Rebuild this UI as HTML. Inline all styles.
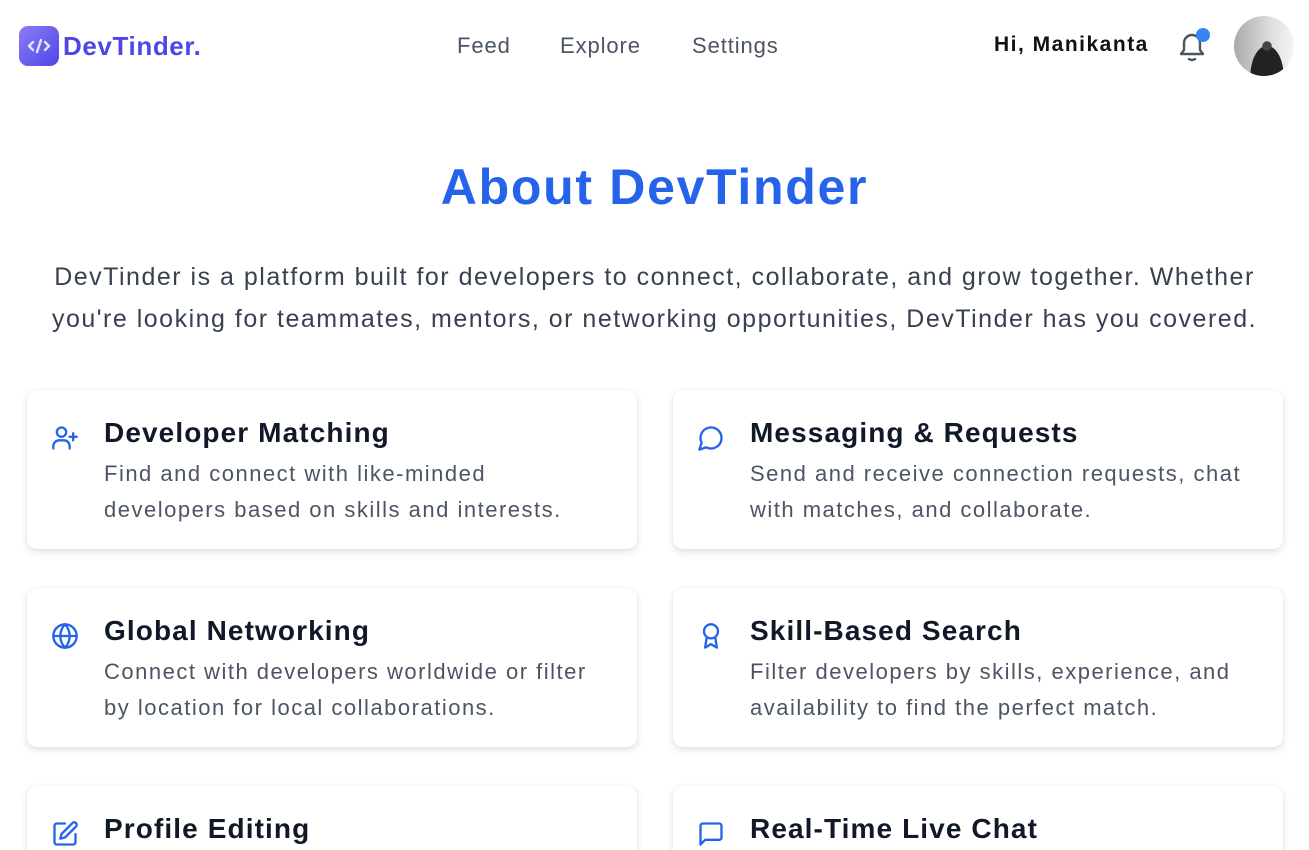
<!DOCTYPE html>
<html><head><meta charset="utf-8"><style>
*{box-sizing:border-box;margin:0;padding:0}
html,body{width:1309px;height:850px;overflow:hidden}
body{background:#fff;font-family:"Liberation Sans",sans-serif;position:relative}
.abs{position:absolute}
.nav a{position:absolute;top:33px;font-size:22px;color:#4b5563;letter-spacing:0.9px}
.card{position:absolute;width:610px;height:159px;background:#fff;border-radius:10px;box-shadow:0 3px 8px rgba(0,0,0,.12),0 0 2px rgba(0,0,0,.06)}
.card.last{height:64px;border-radius:10px 10px 0 0}
.card svg{position:absolute;left:24px;top:34px}
.card h3{position:absolute;left:77px;top:27px;font-size:28px;font-weight:bold;color:#111827;white-space:nowrap;letter-spacing:1.1px}
.card p{position:absolute;left:77px;top:66px;width:540px;font-size:22px;line-height:36px;color:#4b5563;letter-spacing:1.5px;white-space:nowrap}
</style></head><body>
<div class="abs" style="left:19px;top:26px;width:40px;height:40px;border-radius:9px;background:linear-gradient(135deg,#8b7cf8,#4f46e5)">
<svg width="40" height="40" viewBox="0 0 40 40" fill="none" stroke="#e0e7ff" stroke-width="2.4" stroke-linecap="round" stroke-linejoin="round"><path d="M14 16l-4 4 4 4M26 16l4 4-4 4M22 14l-4 12"/></svg></div>
<div class="abs" style="left:63px;top:31px;font-size:26px;font-weight:bold;color:#4f46e5;letter-spacing:0.6px">DevTinder.</div>
<div class="nav"><a style="left:457px">Feed</a><a style="left:560px">Explore</a><a style="left:692px">Settings</a></div>
<div class="abs" style="left:994px;top:33px;font-size:21px;font-weight:bold;color:#111;letter-spacing:1.5px">Hi, Manikanta</div>
<svg class="abs" style="left:1174px;top:28px" width="36" height="36" viewBox="0 0 36 36" fill="none" stroke="#4b5563" stroke-width="2.4" stroke-linecap="round" stroke-linejoin="round"><path d="M10 22V15a8 8 0 0 1 16 0v7l3 4H7z"/><path d="M15 31q3 2 6 0"/></svg>
<div class="abs" style="left:1196px;top:28px;width:14px;height:14px;border-radius:50%;background:#3b82f6"></div>
<div class="abs" style="left:1234px;top:16px;width:60px;height:60px;border-radius:50%;background:radial-gradient(circle at 55% 50%,#444 0 10%,transparent 11%),radial-gradient(ellipse at 55% 100%,#222 0 35%,transparent 36%),linear-gradient(90deg,#aaa,#ddd 60%,#f5f5f5)"></div>
<h1 class="abs" style="left:0;width:1309px;top:158px;text-align:center;font-size:50px;font-weight:bold;color:#2563eb;letter-spacing:1.7px">About DevTinder</h1>
<p class="abs" style="left:0;width:1309px;top:256px;text-align:center;font-size:25px;line-height:42px;color:#374151;letter-spacing:1.5px;white-space:nowrap">DevTinder is a platform built for developers to connect, collaborate, and grow together. Whether<br>you're looking for teammates, mentors, or networking opportunities, DevTinder has you covered.</p>

<div class="card" style="left:27px;top:390px"><svg width="28" height="28" viewBox="0 0 24 24" fill="none" stroke="#2563eb" stroke-width="2" stroke-linecap="round" stroke-linejoin="round"><circle cx="9" cy="7" r="4"/><path d="M2 21v-2a5 5 0 0 1 5-5h4a5 5 0 0 1 5 5v2"/><path d="M19 8v6M16 11h6"/></svg><h3>Developer Matching</h3><p>Find and connect with like-minded<br>developers based on skills and interests.</p></div>
<div class="card" style="left:673px;top:390px"><svg width="28" height="28" viewBox="0 0 24 24" fill="none" stroke="#2563eb" stroke-width="2" stroke-linecap="round" stroke-linejoin="round"><path d="M7.9 20A9 9 0 1 0 4 16.1L2 22z"/></svg><h3>Messaging &amp; Requests</h3><p>Send and receive connection requests, chat<br>with matches, and collaborate.</p></div>
<div class="card" style="left:27px;top:588px"><svg width="28" height="28" viewBox="0 0 24 24" fill="none" stroke="#2563eb" stroke-width="2" stroke-linecap="round" stroke-linejoin="round"><circle cx="12" cy="12" r="10"/><path d="M12 2a14.5 14.5 0 0 0 0 20 14.5 14.5 0 0 0 0-20M2 12h20"/></svg><h3>Global Networking</h3><p>Connect with developers worldwide or filter<br>by location for local collaborations.</p></div>
<div class="card" style="left:673px;top:588px"><svg width="28" height="28" viewBox="0 0 24 24" fill="none" stroke="#2563eb" stroke-width="2" stroke-linecap="round" stroke-linejoin="round"><circle cx="12" cy="8" r="6"/><path d="M8.2 13.9L7 22l5-3 5 3-1.2-8.1"/></svg><h3>Skill-Based Search</h3><p>Filter developers by skills, experience, and<br>availability to find the perfect match.</p></div>
<div class="card last" style="left:27px;top:786px"><svg width="28" height="28" viewBox="0 0 24 24" fill="none" stroke="#2563eb" stroke-width="2" stroke-linecap="round" stroke-linejoin="round"><path d="M12 3H5a2 2 0 0 0-2 2v14a2 2 0 0 0 2 2h14a2 2 0 0 0 2-2v-7"/><path d="M18.4 2.6a2.1 2.1 0 0 1 3 3L12 15l-4 1 1-4z"/></svg><h3>Profile Editing</h3></div>
<div class="card last" style="left:673px;top:786px"><svg width="28" height="28" viewBox="0 0 24 24" fill="none" stroke="#2563eb" stroke-width="2" stroke-linecap="round" stroke-linejoin="round"><path d="M21 15a2 2 0 0 1-2 2H7l-4 4V5a2 2 0 0 1 2-2h14a2 2 0 0 1 2 2z"/></svg><h3>Real-Time Live Chat</h3></div>
</body></html>
